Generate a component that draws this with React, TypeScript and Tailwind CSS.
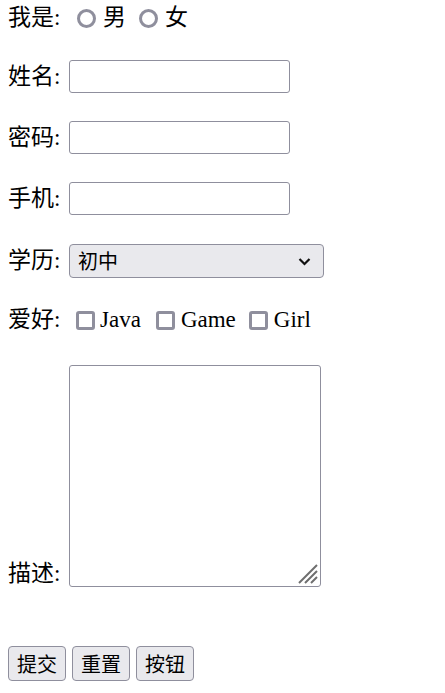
import React from "react";

const serif = "font-['Liberation_Serif','Noto_Sans_CJK_SC',serif]";
const sans = "font-['Noto_Sans_CJK_SC','Liberation_Sans',sans-serif]";

function Radio() {
  return <span className="block w-[19px] h-[19px] rounded-full border-[3px] border-[#8f8f9d] bg-white shrink-0" />;
}

function Check() {
  return <span className="block w-[19px] h-[19px] rounded-[3px] border-[3px] border-[#8f8f9d] bg-white shrink-0" />;
}

function TextInput() {
  return <div className="w-[221px] h-[33px] rounded-[3px] border border-[#8f8f9d] bg-white" />;
}

function Label({ children }: { children: React.ReactNode }) {
  return <span className="w-[61px] shrink-0 whitespace-nowrap">{children}</span>;
}

export default function App() {
  return (
    <div className={`${serif} text-[23px] leading-[28px] text-black bg-white w-[445px] h-[693px] pl-[8px] flex flex-col`}>
      <div className="h-[36px] flex items-center">
        <Label>我是:</Label>
        <span className="ml-[8px]"><Radio /></span>
        <span className="ml-[7px]">男</span>
        <span className="ml-[13px]"><Radio /></span>
        <span className="ml-[7px]">女</span>
      </div>
      <div className="mt-[24px] h-[33px] flex items-center">
        <Label>姓名:</Label>
        <TextInput />
      </div>
      <div className="mt-[28px] h-[33px] flex items-center">
        <Label>密码:</Label>
        <TextInput />
      </div>
      <div className="mt-[28px] h-[33px] flex items-center">
        <Label>手机:</Label>
        <TextInput />
      </div>
      <div className="mt-[29px] h-[34px] flex items-center">
        <Label>学历:</Label>
        <div className={`${sans} w-[255px] h-[34px] rounded-[4px] border border-[#8f8f9d] bg-[#e9e9ed] flex items-center pl-[8px] pr-[12px] text-[20px]`}>
          <span className="flex-1">初中</span>
          <svg width="13" height="9" viewBox="0 0 13 9">
            <path d="M1.5 2 L6.5 7 L11.5 2" fill="none" stroke="#111" strokeWidth="2.2" />
          </svg>
        </div>
      </div>
      <div className="mt-[25px] h-[34px] flex items-center">
        <Label>爱好:</Label>
        <span className="ml-[7px]"><Check /></span>
        <span className="ml-[5px]">Java</span>
        <span className="ml-[15px]"><Check /></span>
        <span className="ml-[6px]">Game</span>
        <span className="ml-[13px]"><Check /></span>
        <span className="ml-[6px]">Girl</span>
      </div>
      <div className="mt-[28px] flex items-end">
        <Label><span className="relative top-[1px]">描述:</span></Label>
        <div className="relative w-[252px] h-[222px] rounded-[3px] border border-[#8f8f9d] bg-white">
          <svg className="absolute right-[2px] bottom-[2px]" width="22" height="22" viewBox="0 0 22 22">
            <path d="M21 3 L3 21 M21 9 L9 21 M21 15 L15 21" stroke="#6f6f6f" strokeWidth="2" fill="none" />
          </svg>
        </div>
      </div>
      <div className={`${sans} mt-[59px] flex gap-[6px] text-[20px]`}>
        {["提交", "重置", "按钮"].map((t) => (
          <div key={t} className="w-[58px] h-[35px] rounded-[4px] border border-[#8f8f9d] bg-[#e9e9ed] flex items-center justify-center">
            {t}
          </div>
        ))}
      </div>
    </div>
  );
}
